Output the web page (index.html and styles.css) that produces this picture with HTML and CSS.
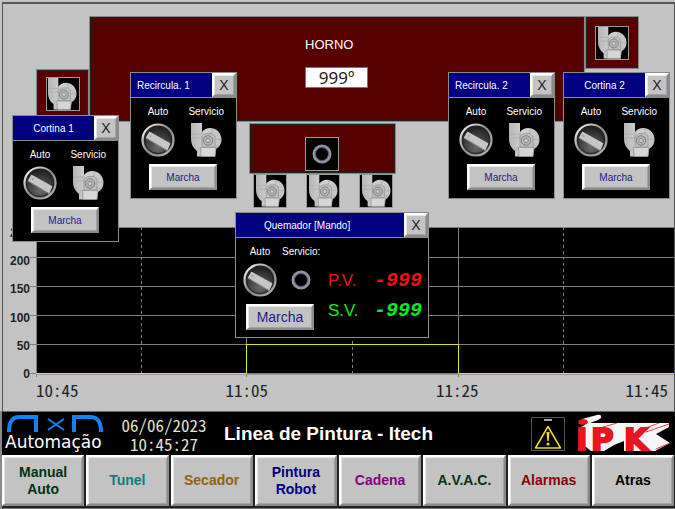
FILE: index.html
```html
<!DOCTYPE html>
<html lang="es">
<head>
<meta charset="utf-8">
<meta name="viewport" content="width=device-width, initial-scale=1">
<title>Linea de Pintura - Itech</title>
<link rel="stylesheet" href="styles.css">
</head>
<body>
<svg class="defs" aria-hidden="true">
  <defs>
    <linearGradient id="steel" x1="0" y1="0" x2="1" y2="0">
      <stop offset="0" stop-color="#b6b6b6"/><stop offset="0.45" stop-color="#d0d0d0"/><stop offset="1" stop-color="#c2c2c2"/>
    </linearGradient>
    <radialGradient id="dial" cx="0.5" cy="0.75" r="0.7">
      <stop offset="0" stop-color="#6a6a6a"/><stop offset="1" stop-color="#1c1c1c"/>
    </radialGradient>
    <linearGradient id="rim" x1="0" y1="0" x2="1" y2="1">
      <stop offset="0" stop-color="#ffffff"/><stop offset="0.5" stop-color="#8a8a8a"/><stop offset="1" stop-color="#b8b8b8"/>
    </linearGradient>
    <symbol id="fan" viewBox="0 0 31 34">
      <path d="M0 0H11V9C13 6.500 16 5 19 5C26 5 30.500 10.500 30.500 16.500C30.500 21 28.500 24 25 26L24 33.500H6V28C2 25 0 21 0 16z" fill="url(#steel)"/>
      <path d="M0 11H11M0 15H11M11 9V18M21 5.500V10M24.500 16.500H30M24 21L28 24M6 28L9 24" stroke="#a8a8a8" stroke-width="0.700" fill="none"/>
      <path d="M11 24V13L15 10.500H21L24 13V24z" fill="#bebebe" stroke="#979797" stroke-width="0.800"/>
      <circle cx="17" cy="17.500" r="4.800" fill="#b4b4b4" stroke="#808080"/>
      <circle cx="17" cy="17.500" r="2.200" fill="#c8c8c8" stroke="#8c8c8c"/>
      <path d="M9.500 24.500H25L24 33.500H10z" fill="#d6d6d6" stroke="#929292" stroke-width="0.800"/>
    </symbol>
    <symbol id="knob" viewBox="0 0 34 34">
      <circle cx="17" cy="17" r="15.500" fill="url(#dial)" stroke="url(#rim)" stroke-width="2.200"/>
      <circle cx="17" cy="17" r="13.500" fill="none" stroke="#222"/>
      <path d="M8.500 9L29 20.500 26 27.500 5 15z" fill="#c6c6c6" stroke="#e2e2e2" stroke-width="0.600"/>
      <path d="M5 15l21 12.500" stroke="#777"/>
      <circle cx="9.500" cy="13" r="1" fill="#999"/>
    </symbol>
    <symbol id="flame" viewBox="0 0 20 20">
      <circle cx="10" cy="10" r="8" fill="#000" stroke="#939393" stroke-width="3"/>
      <circle cx="10" cy="10" r="6.500" fill="none" stroke="#51519a"/>
    </symbol>
  </defs>
</svg>

<main class="scene">
  <section class="plant" aria-label="Horno">
    <div class="duct furnace">
      <span class="furnace-name">HORNO</span>
      <output class="furnace-temp">999º</output>
    </div>
    <div class="duct inlet"><span class="tile"><svg class="fan"><use href="#fan"/></svg></span></div>
    <div class="duct outlet"><span class="tile"><svg class="fan"><use href="#fan"/></svg></span></div>
    <div class="duct burner"><span class="tile"><svg class="flame"><use href="#flame"/></svg></span></div>
    <div class="fan-row">
      <span class="tile"><svg class="fan"><use href="#fan"/></svg></span>
      <span class="tile"><svg class="fan"><use href="#fan"/></svg></span>
      <span class="tile"><svg class="fan"><use href="#fan"/></svg></span>
    </div>
  </section>

  <section class="trend" aria-label="Tendencia">
    <div class="scale"><span>250</span><span>200</span><span>150</span><span>100</span><span>50</span><span>0</span></div>
    <svg class="plot" viewBox="0 0 638 147" preserveAspectRatio="none">
      <rect width="638" height="147" fill="#000"/>
      <path class="grid" d="M0 .5H638M-6 30H638M-6 59.500H638M-6 88.500H638M-6 117.500H638M-6 146H638M.5 0V150M210.500 0V150M421.500 0V150"/>
      <path class="grid dashed" d="M105.500 0V150M316.500 0V150M526.500 0V150"/>
      <path class="curve" d="M0 146.500H210.500V117.500H421.500V146.500H638"/>
    </svg>
    <div class="times"><span>10:45</span><span>11:05</span><span>11:25</span><span>11:45</span></div>
  </section>

  <section class="window recircula-1">
    <header class="window-bar"><h2>Recircula. 1</h2><button class="close">X</button></header>
    <div class="controls">
      <div class="control"><span>Auto</span><svg class="knob"><use href="#knob"/></svg></div>
      <div class="control"><span>Servicio</span><svg class="fan"><use href="#fan"/></svg></div>
    </div>
    <button class="run">Marcha</button>
  </section>
  <section class="window cortina-1">
    <header class="window-bar"><h2>Cortina 1</h2><button class="close">X</button></header>
    <div class="controls">
      <div class="control"><span>Auto</span><svg class="knob"><use href="#knob"/></svg></div>
      <div class="control"><span>Servicio</span><svg class="fan"><use href="#fan"/></svg></div>
    </div>
    <button class="run">Marcha</button>
  </section>
  <section class="window recircula-2">
    <header class="window-bar"><h2>Recircula. 2</h2><button class="close">X</button></header>
    <div class="controls">
      <div class="control"><span>Auto</span><svg class="knob"><use href="#knob"/></svg></div>
      <div class="control"><span>Servicio</span><svg class="fan"><use href="#fan"/></svg></div>
    </div>
    <button class="run">Marcha</button>
  </section>
  <section class="window cortina-2">
    <header class="window-bar"><h2>Cortina 2</h2><button class="close">X</button></header>
    <div class="controls">
      <div class="control"><span>Auto</span><svg class="knob"><use href="#knob"/></svg></div>
      <div class="control"><span>Servicio</span><svg class="fan"><use href="#fan"/></svg></div>
    </div>
    <button class="run">Marcha</button>
  </section>
  <section class="window quemador">
    <header class="window-bar"><h2>Quemador [Mando]</h2><button class="close">X</button></header>
    <div class="quemador-body">
      <div class="quemador-left">
        <div class="controls">
          <div class="control"><span>Auto</span><svg class="knob"><use href="#knob"/></svg></div>
          <div class="control"><span>Servicio:</span><svg class="flame"><use href="#flame"/></svg></div>
        </div>
        <button class="run large">Marcha</button>
      </div>
      <dl class="readings">
        <div class="reading actual"><dt>P.V.</dt><dd>-999</dd></div>
        <div class="reading setpoint"><dt>S.V.</dt><dd>-999</dd></div>
      </dl>
    </div>
  </section>
</main>

<header class="status">
  <div class="brand">
    <svg class="brand-mark" viewBox="0 0 98 17" aria-hidden="true">
      <g fill="none" stroke="#0f84f5"><path d="M2 17C2 7 5 2 12 2H29V17M67 17V2H83C91 2 94 7 94 17" stroke-width="4"/><path d="M41 4L57 15M57 4L41 15" stroke-width="2"/></g>
    </svg>
    <span>Automação</span>
  </div>
  <time class="clock" datetime="2023-06-06T10:45:27"><span>06/06/2023</span><span>10:45:27</span></time>
  <h1>Linea de Pintura - Itech</h1>
  <svg class="warning" viewBox="0 0 34 34" role="img" aria-label="Aviso">
    <rect x="0.500" y="0.500" width="33" height="33" fill="#000" stroke="#555"/>
    <path d="M13 3h8" stroke="#aaa" stroke-width="2"/>
    <path d="M17 9.500L29.500 31h-25z" fill="none" stroke="#e8e020" stroke-width="1.500" stroke-linejoin="round"/>
    <path d="M15.500 15h3l-.8 9h-1.400z" fill="#e8e020"/><circle cx="17" cy="27" r="1.600" fill="#e8e020"/>
  </svg>
  <svg class="ipk" viewBox="0 0 94 42" role="img" aria-label="IPK">
    <path d="M5 6L20 2Q25 1 24 5L21 7 8 12z" fill="#f6f6f6"/>
    <ellipse cx="6" cy="9" rx="5" ry="3" fill="#e8141e"/>
    <path d="M4 14L12 10H92V14L79 21 93 30 78 38H47V28L37 32 27 38H14L4 30z" fill="#f6f6f6"/>
    <path d="M69 19L92 11M66 16L82 10M79 36l14-6M26 14L40 10" stroke="#e8141e" stroke-width="0.800"/>
    <g class="ipk-letters"><text x="-1" y="37">I</text><text x="14" y="37">P</text><text x="47" y="37">K</text></g>
  </svg>
</header>

<nav class="menu">
  <button class="green">Manual<br>Auto</button>
  <button class="teal">Tunel</button>
  <button class="ochre">Secador</button>
  <button class="navy">Pintura<br>Robot</button>
  <button class="purple">Cadena</button>
  <button class="green">A.V.A.C.</button>
  <button class="maroon">Alarmas</button>
  <button>Atras</button>
</nav>
</body>
</html>
```
FILE: styles.css
```css
:root {
  --face: #c3c3c3;
  --edge: #868686;
  --digits: "Noto Sans Mono CJK JP", "Liberation Mono", monospace;
}

* { box-sizing: border-box; }

body {
  margin: 0;
  min-height: 100vh;
  display: grid;
  grid-template-rows: 1fr auto auto;
  background: #888;
  font-family: "Liberation Sans", Arial, sans-serif;
  font-size: 10px;
}

h1, h2, dl, dd { margin: 0; }
svg { display: block; }
.defs { position: absolute; width: 0; height: 0; }
.fan { width: 31px; height: 34px; }
.knob { width: 34px; height: 34px; }
.flame { width: 20px; height: 20px; }

button {
  padding: 0;
  font-family: inherit;
  color: #000;
  background: var(--face);
  border: 2px solid;
  border-color: #fff #8a8a8a #8a8a8a #fff;
  box-shadow: inset 1px 1px #e6e6e6, inset -1px -1px #a2a2a2;
  cursor: pointer;
}

/* Process picture */
.scene {
  position: relative;
  display: grid;
  grid-template-rows: 227px 1fr;
  background: var(--face);
}
.scene::before {
  content: "";
  position: absolute;
  inset: 2px 0 0 2px;
  border: solid #555;
  border-width: 2px 1px 0 1px;
  pointer-events: none;
}

.duct {
  position: absolute;
  display: flex;
  justify-content: center;
  background: #560000;
  border: 1px solid var(--edge);
  outline: 1px solid #222;
  outline-offset: -2px;
}
.furnace {
  left: 89px; right: 90px; top: 16px; height: 106px;
  flex-direction: column;
  justify-content: flex-start;
  padding: 20px 0 0 215px;
  gap: 15px;
  color: #fff;
}
.furnace-name { font-size: 13px; line-height: 15px; }
.furnace-temp {
  width: 63px;
  height: 21px;
  background: #fff;
  border: 1px solid #777;
  color: #222;
  font: 17px/19px "Noto Sans", sans-serif;
  text-align: center;
}
.inlet { left: 36px; top: 69px; width: 53px; height: 53px; padding-top: 7px; }
.outlet { right: 36px; top: 16px; width: 54px; height: 53px; align-items: center; }
.burner { left: 249px; top: 123px; width: 147px; height: 51px; align-items: flex-end; padding: 0 2px 2px 0; }

.tile {
  width: 34px;
  height: 34px;
  display: grid;
  place-items: center;
  background: #000;
  border: 1px solid #999;
  overflow: hidden;
}
.tile .fan { width: 29px; height: 32px; }
.fan-row {
  position: absolute;
  left: 253px; top: 174px;
  display: flex;
  gap: 19px;
}

/* Trend */
.trend {
  display: grid;
  grid-template: 1fr 37px / 36px 1fr;
}
.scale {
  display: flex;
  flex-direction: column;
  justify-content: space-between;
  padding-right: 6px;
  margin-bottom: -6px;
  font: bold 12px/12px "Liberation Sans", sans-serif;
  text-align: right;
  color: #222;
}
.plot { width: 100%; height: 100%; min-height: 147px; overflow: visible; }
.grid { fill: none; stroke: #808080; vector-effect: non-scaling-stroke; shape-rendering: crispEdges; }
.dashed { stroke-dasharray: 3 3; }
.curve { fill: none; stroke: #e6e600; stroke-width: 1; vector-effect: non-scaling-stroke; shape-rendering: crispEdges; }
.times {
  grid-column: 2;
  display: grid;
  grid-template-columns: 1fr 2fr 2fr 1fr;
  align-content: start;
  padding: 6px 7px 0 0;
  font: 17px/20px var(--digits);
  text-align: center;
  color: #222;
}
.times :first-child { text-align: left; }
.times :last-child { text-align: right; }

/* Pop-up windows */
.window {
  position: absolute;
  width: 107px;
  padding-bottom: 8px;
  background: #000;
  border: 1px solid #8c8c8c;
  color: #fff;
}
.cortina-1 { left: 12px; top: 115px; }
.recircula-1 { left: 130px; top: 72px; }
.recircula-2 { right: 120px; top: 72px; }
.cortina-2 { right: 5px; top: 72px; }
.quemador { left: 235px; top: 212px; width: 194px; padding-bottom: 7px; }

.window-bar {
  display: flex;
  height: 25px;
  background: #000080;
  border-bottom: 1px solid #8c8c8c;
}
.window-bar h2 {
  flex: 1;
  font-size: 10px;
  font-weight: normal;
  line-height: 25px;
  text-align: center;
}
.recircula-1 h2, .recircula-2 h2 { padding-left: 6px; text-align: left; }
.quemador h2 { padding-left: 28px; text-align: left; }
.close {
  width: 24px;
  height: 24px;
  color: #222;
  font-size: 14px;
  line-height: 20px;
}
.controls { display: flex; padding: 8px 12px 0 10px; justify-content: space-between; }
.control {
  display: flex;
  flex-direction: column;
  align-items: center;
  gap: 5px;
  line-height: 12px;
}
.run {
  display: block;
  width: 68px;
  height: 26px;
  margin: 7px 0 0 18px;
  font-size: 10px;
  color: #1c1c90;
}

.quemador-body { display: flex; justify-content: space-between; }
.quemador-left .controls { padding: 8px 0 0 7px; gap: 5px; justify-content: flex-start; }
.quemador .control .flame { margin-top: 7px; }
.quemador .run { margin: 7px 0 0 10px; }
.run.large { font-size: 14px; }
.readings {
  display: grid;
  align-content: start;
  gap: 10px;
  padding: 33px 6px 0 0;
}
.reading { display: flex; gap: 14px; align-items: center; line-height: 20px; }
.reading dt { width: 32px; font-size: 17px; }
.reading dd { font: italic bold 20px/20px "Liberation Mono", monospace; }
.actual { color: #f01010; }
.setpoint { color: #10e820; }

/* Status bar */
.status {
  display: flex;
  align-items: center;
  height: 44px;
  margin-left: 2px;
  padding: 0 4px 0 3px;
  background: #000;
  border-top: 1px solid #666;
  color: #fff;
}
.brand { width: 100px; display: grid; font: 17px/20px "DejaVu Sans", sans-serif; }
.brand-mark { width: 98px; height: 17px; margin-left: 2px; }
.clock {
  width: 86px;
  margin-left: 16px;
  display: grid;
  font: 17px/19px var(--digits);
  text-align: center;
  color: #e4e0d4;
}
.status h1 { flex: 1; margin-left: 17px; font-size: 19px; white-space: nowrap; }
.warning { width: 34px; height: 34px; margin-right: 12px; }
.ipk { width: 94px; height: 42px; overflow: visible; }
.ipk-letters {
  font: bold 31px "DejaVu Sans", sans-serif;
  fill: #e8141e;
  stroke: #e8141e;
  stroke-width: 2px;
}

/* Screen menu */
.menu {
  display: grid;
  grid-template-columns: repeat(8, 1fr);
  gap: 2px;
  margin-left: 2px;
  padding: 0 1px 2px 0;
  background: #222;
  border-bottom: 1px solid #777;
}
.menu button { height: 51px; font-size: 14px; font-weight: bold; line-height: 17px; }
.green { color: #003312; }
.teal { color: #068080; }
.ochre { color: #966010; }
.navy { color: #000080; }
.purple { color: #850085; }
.maroon { color: #8c0008; }
```
